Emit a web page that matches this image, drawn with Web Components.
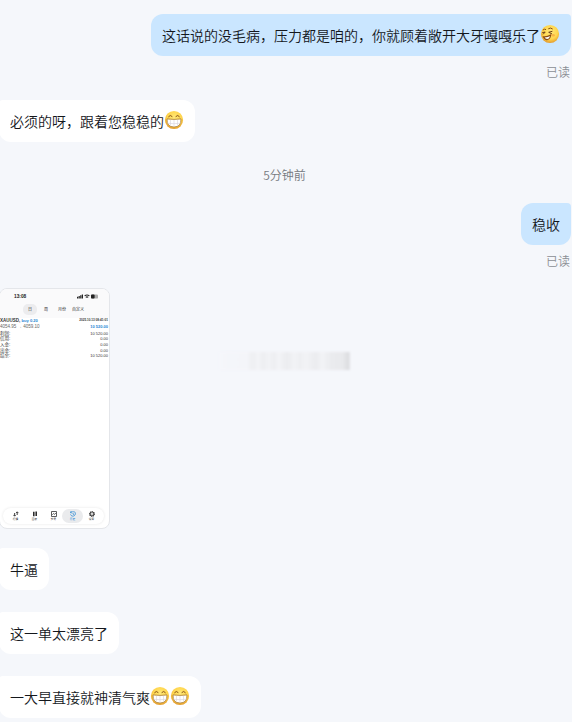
<!DOCTYPE html>
<html lang="zh-CN">
<head>
<meta charset="utf-8">
<title>聊天</title>
<style>
body {
  margin: 0;
  background: #f5f7fb;
  font-family: "Noto Sans CJK SC", sans-serif;
  font-weight: 350;
  overflow: hidden;
}
</style>
</head>
<body>
<chat-log>
  <chat-message side="out" status="已读">这话说的没毛病，压力都是咱的，你就顾着敞开大牙嘎嘎乐了<chat-emoji name="smirk"></chat-emoji></chat-message>
  <chat-message>必须的呀，跟着您稳稳的<chat-emoji name="grin"></chat-emoji></chat-message>
  <chat-time>5分钟前</chat-time>
  <chat-message side="out" status="已读">稳收</chat-message>
  <div class="media">
    <phone-shot></phone-shot>
    <faded-strip></faded-strip>
  </div>
  <chat-message>牛逼</chat-message>
  <chat-message>这一单太漂亮了</chat-message>
  <chat-message>一大早直接就神清气爽<chat-emoji name="grin"></chat-emoji><chat-emoji name="grin"></chat-emoji></chat-message>
</chat-log>

<script>
function attach(el, html) {
  const template = document.createElement("template");
  template.innerHTML = html;
  el.attachShadow({ mode: "open" });
  el.shadowRoot.appendChild(template.content.cloneNode(true));
}

class ChatLog extends HTMLElement {
  constructor() {
    super();
    attach(this, `
<style>
:host {
  display: flex;
  flex-direction: column;
  box-sizing: border-box;
  width: 572px;
  height: 722px;
  padding: 14px 1px 0 0;
  overflow: hidden;
}
::slotted(*) { flex: none; }
::slotted(chat-message) { margin-bottom: 22px; }
::slotted([side="out"]) { margin-bottom: 20px; }
::slotted(chat-time) { margin-bottom: 19px; }
::slotted(.media) {
  display: flex;
  gap: 109px;
  height: 241px;
  margin: -1px 0 19px -1px;
}
</style>
<slot></slot>
`);
  }
}

class ChatMessage extends HTMLElement {
  constructor() {
    super();
    attach(this, `
<style>
:host {
  display: flex;
  flex-direction: column;
  align-items: flex-start;
  margin-left: -1px;
}
:host([side="out"]) { align-items: flex-end; }
.bubble {
  display: flex;
  align-items: center;
  box-sizing: border-box;
  height: 42px;
  padding: 0 11px;
  border-radius: 4px 12px 12px 12px;
  background: #fff;
  color: #14171c;
  font-size: 14px;
  line-height: 20px;
  white-space: nowrap;
}
:host([side="out"]) .bubble {
  border-radius: 12px 4px 12px 12px;
  background: #cae6ff;
}
.status {
  height: 20px;
  margin-top: 5px;
  margin-bottom: -1px;
  padding-right: 1px;
  color: #8b8e94;
  font-size: 12px;
  line-height: 21px;
}
.status:empty { display: none; }
</style>
<div class="bubble"><slot></slot></div>
<div class="status"></div>
`);
    this.shadowRoot.querySelector(".status").textContent = this.getAttribute("status") || "";
  }
}

class ChatTime extends HTMLElement {
  constructor() {
    super();
    attach(this, `
<style>
:host {
  display: block;
  height: 20px;
  padding-right: 2px;
  text-align: center;
  color: #777a80;
  font-size: 12px;
  line-height: 21px;
}
</style>
<slot></slot>
`);
  }
}

const faces = {
  grin: `
<path d="M4.6 6.6Q6.2 4.2 8.1 6.4M11.9 6.4Q13.8 4.2 15.4 6.6" fill="none" stroke="#865019" stroke-width="1" stroke-linecap="round"/>
<path d="M3 8.9Q10 9.9 17 8.9Q17.4 17 10 17Q2.6 17 3 8.9Z" fill="#fff" stroke="#a87a33" stroke-width=".8"/>
<path d="M3.6 13.2Q10 14.2 16.4 13.2M6.5 9.8V15.6M10 10V16.5M13.5 9.8V15.6" fill="none" stroke="#d6d1dc" stroke-width=".6"/>`,
  smirk: `
<path d="M3.2 5.8Q4.4 4.5 5.7 5.4M8.6 4.6Q10.6 3.2 12.4 4.8" fill="none" stroke="#8a4c12" stroke-width="1" stroke-linecap="round"/>
<path d="M2.6 8.6L5.2 8L3.4 10M12 7.4L8.7 8.3L11.6 9.7" fill="none" stroke="#683b16" stroke-width="1" stroke-linecap="round"/>
<path d="M3.4 12.8Q7.4 13.2 10.6 11Q10.3 15.2 7 15.6Q4.6 15.6 3.4 12.8Z" fill="#fff" stroke="#8a4c12" stroke-width="1.1"/>
<ellipse cx="13" cy="11.2" rx="1.8" ry="1.2" fill="#f28b2e" opacity=".5"/>`
};

class ChatEmoji extends HTMLElement {
  constructor() {
    super();
    attach(this, `
<style>
:host { display: block; width: 20px; height: 20px; margin-top: -2px; }
svg { display: block; }
</style>
<svg width="20" height="20" viewBox="0 0 20 20">
  <defs>
    <radialGradient id="skin" cx=".52" cy=".38" r=".62">
      <stop offset="0" stop-color="#ffe979"/>
      <stop offset=".65" stop-color="#ffd54c"/>
      <stop offset="1" stop-color="#e39a2c"/>
    </radialGradient>
  </defs>
  <circle cx="10" cy="10" r="9.1" fill="url(#skin)"/>
  ${faces[this.getAttribute("name")]}
</svg>
`);
  }
}

class PhoneShot extends HTMLElement {
  constructor() {
    super();
    attach(this, `
<style>
:host {
  display: flex;
  flex-direction: column;
  box-sizing: border-box;
  width: 111px;
  height: 241px;
  border: 1px solid #e4e6ea;
  border-radius: 8px;
  background: #fff;
  color: #333;
  font: 4px/5.6px "Liberation Sans", "Noto Sans CJK SC", sans-serif;
  overflow: hidden;
}
.head { height: 29px; background: #fafafb; }
.bar, .line { display: flex; justify-content: space-between; white-space: nowrap; }
.bar {
  align-items: center;
  height: 7px;
  padding: 4px 11px 0 14px;
  font-size: 4.8px;
  font-weight: bold;
  color: #222;
}
.chips {
  display: grid;
  grid-template-columns: 14px 18px 14px 18px;
  height: 11px;
  margin: 4px 0 0 23px;
  line-height: 11px;
  text-align: center;
}
.chips span:first-child { border-radius: 5px; background: #ececee; }
.line { height: 5.6px; padding-right: 1px; }
.line.first { margin-top: 1.6px; }
.line span:first-child { font-size: 4.5px; }
.blue { color: #2385d3; }
.line .muted { color: #666; }
.line .deal { font-weight: bold; font-size: 4.1px; }
.line .deal .blue { font-size: 4.1px; }
.date { font-size: 3.1px; font-weight: bold; }
.tabs {
  display: grid;
  grid-template-columns: repeat(5, 19px);
  justify-content: center;
  width: 101px;
  height: 16px;
  margin: auto 0 4px 3px;
  border-radius: 8px;
  background: #fff;
  box-shadow: 0 0 3px #0000001a;
}
.tab {
  display: flex;
  flex-direction: column;
  align-items: center;
  box-sizing: border-box;
  height: 14px;
  margin: 1px -1px;
  padding-top: 2px;
  border-radius: 7px;
  font-size: 2.7px;
  line-height: 5px;
}
.tab.on { background: #eaebed; color: #2385d3; }
.tab svg { flex: none; width: 6px; height: 6px; }
</style>
<div class="head">
  <div class="bar">
    <span>13:08</span>
    <svg width="21" height="5" viewBox="0 0 21 5">
      <path d="M0 4.4V2.8H1.2V4.4ZM1.6 4.4V2H2.8V4.4ZM3.2 4.4V1.2H4.4V4.4ZM4.8 4.4V.4H6V4.4Z" fill="#222"/>
      <path d="M7.6 1.9Q10 0 12.4 1.9M8.8 3.4Q10 2.3 11.2 3.4" fill="none" stroke="#222" stroke-width="1.1"/>
      <rect x="14" y=".4" width="7" height="4.2" rx="1.2" fill="#aaa"/>
      <rect x="14" y=".4" width="3.6" height="4.2" rx="1" fill="#222"/>
    </svg>
  </div>
  <div class="chips"><span>日</span><span>周</span><span>月份</span><span>自定义</span></div>
</div>
<div class="line"><span class="deal">XAUUSD, <span class="blue">buy 0.20</span></span><span class="date">2025.10.13 08:41:01</span></div>
<div class="line"><span class="muted">4054.95 → 4059.10</span><b class="blue">10 520.00</b></div>
<div class="line first"><span>利润:</span><span>10 520.00</span></div>
<div class="line"><span>信用:</span><span>0.00</span></div>
<div class="line"><span>入金:</span><span>0.00</span></div>
<div class="line"><span>出金:</span><span>0.00</span></div>
<div class="line"><span>结余:</span><span>10 520.00</span></div>
<div class="tabs">
  <div class="tab"><svg viewBox="0 0 6 6"><path d="M1.6 2V5M.4 3.9L1.6 5.2L2.8 3.9M4.2 4V1M3 2.1L4.2.8L5.4 2.1" fill="none" stroke="#333" stroke-width=".9"/></svg>行情</div>
  <div class="tab"><svg viewBox="0 0 6 6"><path d="M1.8.8V5.3M4.2.4V5" stroke="#222" stroke-width="1.5"/></svg>图表</div>
  <div class="tab"><svg viewBox="0 0 6 6"><path d="M.5.5H5.5V5.5H.5ZM1.3 3.7L2.6 2.5L3.5 3.4L4.8 2" fill="none" stroke="#333" stroke-width=".8"/></svg>交易</div>
  <div class="tab on"><svg viewBox="0 0 6 6"><path d="M.7 1.5A2.5 2.5 0 1 1 .5 3.4M.6.4V1.8H2M3 1.5V3.1L4.2 3.7" fill="none" stroke="#2385d3" stroke-width=".7"/></svg>历史</div>
  <div class="tab"><svg viewBox="0 0 6 6"><circle cx="3" cy="3" r="2" fill="none" stroke="#333" stroke-width="1.2"/><circle cx="3" cy="3" r="2.6" fill="none" stroke="#333" stroke-width=".8" stroke-dasharray="1 1"/><circle cx="3" cy="3" r=".6" fill="#333"/></svg>设置</div>
</div>
`);
  }
}

class FadedStrip extends HTMLElement {
  constructor() {
    super();
    attach(this, `
<style>
:host {
  display: block;
  width: 131px;
  height: 20px;
  margin-top: 64px;
}
div {
  height: 18px;
  filter: blur(1px);
  background: linear-gradient(90deg, #f5f7fb 0, #f4f5f9 22%, #eff0f3 24% 27%, #f3f4f7 30%, #edeef1 34%, #f2f3f6 38%, #edeef1 42%, #f3f4f7 46%, #ebecef 52%, #f2f3f6 57%, #eeeff2 62%, #f2f3f6 66%, #ebecef 74%, #f2f3f6 79%, #eaebee 86%, #e9eaed 94%, #dcdde0 99%, #e7e8eb);
}
</style>
<div></div>
`);
  }
}

customElements.define("chat-log", ChatLog);
customElements.define("chat-message", ChatMessage);
customElements.define("chat-time", ChatTime);
customElements.define("chat-emoji", ChatEmoji);
customElements.define("phone-shot", PhoneShot);
customElements.define("faded-strip", FadedStrip);
</script>
</body>
</html>
